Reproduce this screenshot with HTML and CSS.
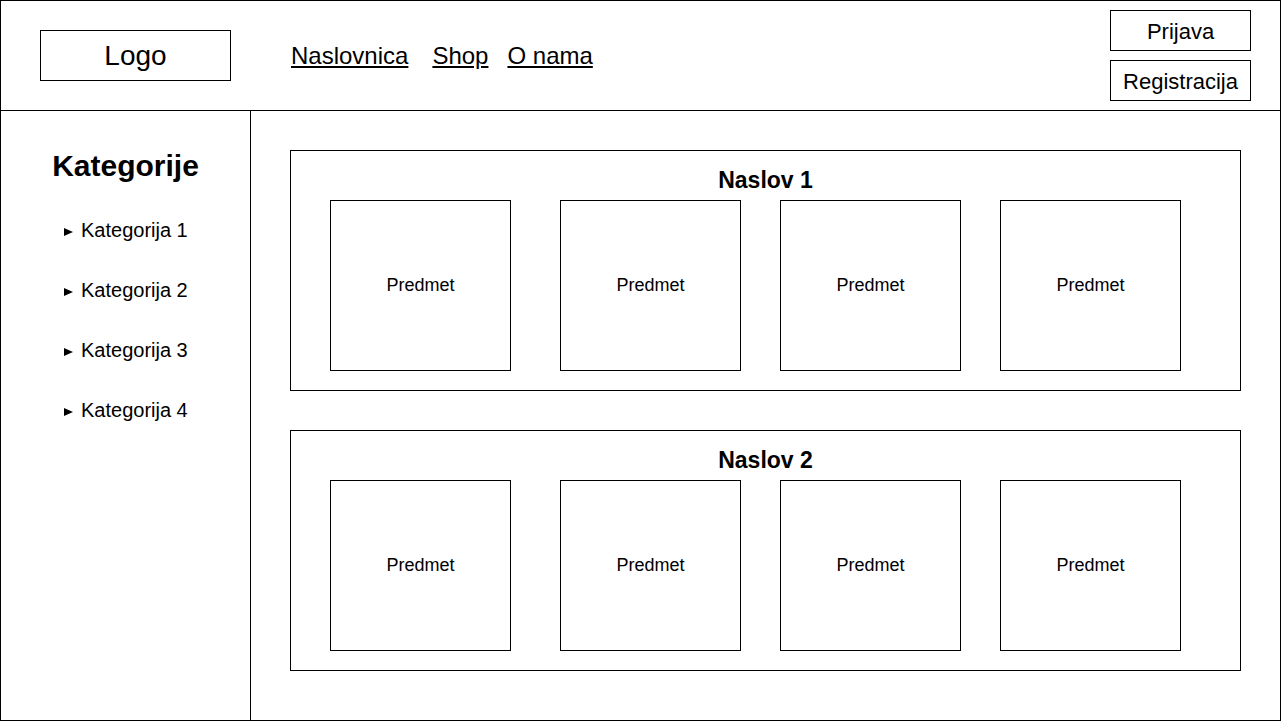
FILE: index.html
```html
<!DOCTYPE html>
<html lang="hr">
<head>
    <meta charset="UTF-8">
    <meta name="viewport" content="width=device-width, initial-scale=1.0">
    <title>Shop</title>
    <link rel="stylesheet" href="styles.css">
</head>
<body>
    <div class="frame">
        <!-- Header -->
        <header class="header">
            <div class="logo">Logo</div>
            <nav class="nav">
                <a href="#" class="nav-home">Naslovnica</a>
                <a href="#" class="nav-shop">Shop</a>
                <a href="#" class="nav-about">O nama</a>
            </nav>
            <div class="auth">
                <a href="#" class="auth-btn">Prijava</a>
                <a href="#" class="auth-btn">Registracija</a>
            </div>
        </header>

        <div class="body">
            <!-- Sidebar -->
            <aside class="sidebar">
                <h2>Kategorije</h2>
                <ul>
                    <li><span class="arrow"></span>Kategorija 1</li>
                    <li><span class="arrow"></span>Kategorija 2</li>
                    <li><span class="arrow"></span>Kategorija 3</li>
                    <li><span class="arrow"></span>Kategorija 4</li>
                </ul>
            </aside>

            <!-- Main Content -->
            <main class="main">
                <section class="panel">
                    <h3>Naslov 1</h3>
                    <div class="items">
                        <div class="item">Predmet</div>
                        <div class="item">Predmet</div>
                        <div class="item">Predmet</div>
                        <div class="item">Predmet</div>
                    </div>
                </section>

                <section class="panel">
                    <h3>Naslov 2</h3>
                    <div class="items">
                        <div class="item">Predmet</div>
                        <div class="item">Predmet</div>
                        <div class="item">Predmet</div>
                        <div class="item">Predmet</div>
                    </div>
                </section>
            </main>
        </div>
    </div>
</body>
</html>
```

FILE: styles.css
```css
* {
    box-sizing: border-box;
}

body {
    margin: 0;
    padding: 0;
    font-family: "Liberation Sans", Arial, sans-serif;
    color: #000;
    background-color: #fff;
}

.frame {
    width: 1281px;
    height: 721px;
    border: 1px solid #000;
    display: flex;
    flex-direction: column;
}

/* Header */
.header {
    height: 110px;
    border-bottom: 1px solid #000;
    display: flex;
    align-items: flex-start;
    flex-shrink: 0;
}

.logo {
    width: 191px;
    height: 51px;
    margin: 29px 0 0 39px;
    border: 1px solid #000;
    display: flex;
    align-items: center;
    justify-content: center;
    font-size: 28px;
}

.nav {
    display: flex;
    margin: 41px 0 0 60px;
    font-size: 24px;
    line-height: 28px;
}

.nav a {
    color: #000;
    text-decoration: underline;
}

.nav-shop {
    margin-left: 24px;
}

.nav-about {
    margin-left: 19px;
}

.auth {
    margin: 9px 29px 0 auto;
    display: flex;
    flex-direction: column;
    gap: 9px;
}

.auth-btn {
    width: 141px;
    height: 41px;
    padding-top: 2px;
    border: 1px solid #000;
    display: flex;
    align-items: center;
    justify-content: center;
    font-size: 22px;
    color: #000;
    text-decoration: none;
}

/* Body */
.body {
    display: flex;
    flex: 1;
}

.sidebar {
    width: 250px;
    border-right: 1px solid #000;
    flex-shrink: 0;
}

.sidebar h2 {
    margin: 37px 0 0;
    font-size: 30px;
    line-height: 36px;
    font-weight: bold;
    text-align: center;
}

.sidebar ul {
    list-style: none;
    margin: 34px 0 0;
    padding: 0 0 0 63px;
}

.sidebar li {
    font-size: 20px;
    line-height: 24px;
    margin-bottom: 36px;
    display: flex;
    align-items: center;
}

.arrow {
    width: 0;
    height: 0;
    border-top: 4.5px solid transparent;
    border-bottom: 4.5px solid transparent;
    border-left: 9px solid #000;
    margin: 4px 8px 0 0;
}

.main {
    flex: 1;
    padding: 39px 0 0 39px;
    display: flex;
    flex-direction: column;
    gap: 39px;
}

.panel {
    width: 951px;
    height: 241px;
    border: 1px solid #000;
    padding: 0 0 0 39px;
}

.panel h3 {
    height: 49px;
    margin: 0 0 0 -39px;
    padding-top: 16px;
    font-size: 23px;
    line-height: 26px;
    font-weight: bold;
    text-align: center;
}

.items {
    display: flex;
    gap: 39px;
}

.item {
    width: 181px;
    height: 171px;
    border: 1px solid #000;
    display: flex;
    align-items: center;
    justify-content: center;
    font-size: 18px;
}

.item:first-child {
    margin-right: 10px;
}
```
